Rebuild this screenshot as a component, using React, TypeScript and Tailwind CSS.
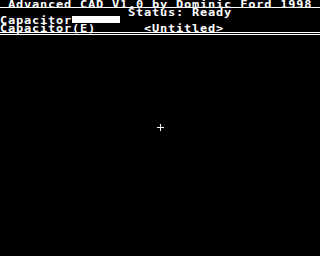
import React from "react";

function T({ children }: { children: React.ReactNode }) {
  return (
    <span className="inline-block mt-[2px] origin-top scale-y-[0.8] font-['DejaVu_Sans_Mono',monospace] font-bold text-[12px] leading-[8px] tracking-[0.78px] whitespace-pre text-white">
      {children}
    </span>
  );
}

export default function App() {
  return (
    <div className="w-[320px] h-[256px] bg-black relative overflow-hidden">
      <div className="flex flex-col leading-[8px]">
        <div className="h-[7px] pl-[8px] flex items-start">
          <T>Advanced CAD V1.0 by Dominic Ford 1998</T>
        </div>
        <div className="h-[1px] bg-white" />
        <div className="h-[8px] pl-[128px] flex items-start">
          <T>Status: Ready</T>
        </div>
        <div className="h-[8px] flex items-start">
          <div className="w-[72px] flex">
            <T>Capacitor</T>
          </div>
          <div className="w-[48px] h-[7px] mt-[0px] bg-white" />
        </div>
        <div className="h-[8px] flex items-start">
          <div className="w-[144px] flex">
            <T>Capacitor(E)</T>
          </div>
          <T>&lt;Untitled&gt;</T>
        </div>
        <div className="h-[1px] bg-white" />
        <div className="h-[1px]" />
        <div className="h-[1px] bg-white" />
      </div>
      <div className="absolute left-[157px] top-[127px] w-[7px] h-[1px] bg-white" />
      <div className="absolute left-[160px] top-[124px] w-[1px] h-[7px] bg-white" />
    </div>
  );
}
